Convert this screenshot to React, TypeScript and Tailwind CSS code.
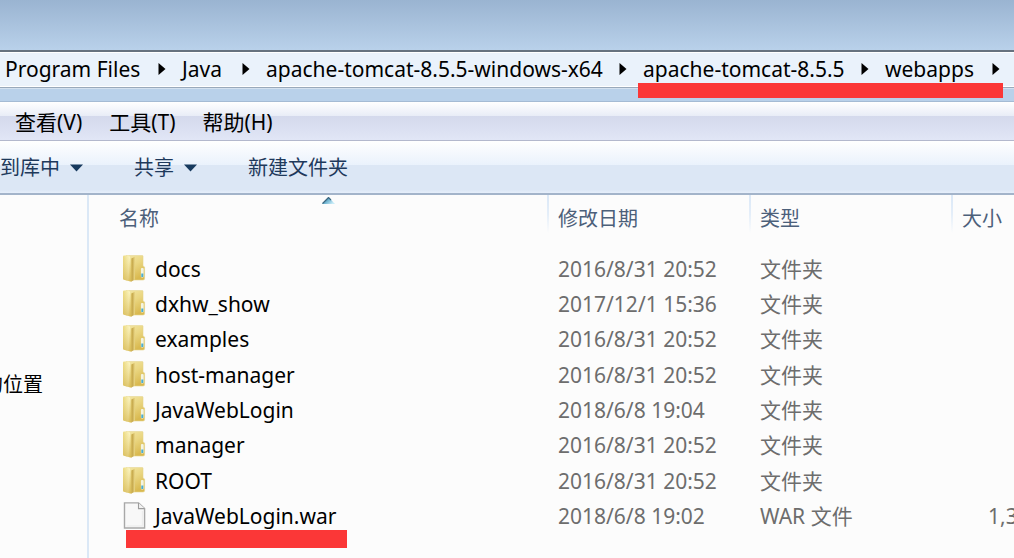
import React from "react";

type Entry = {
  name: string;
  modified: string;
  type: string;
  size?: string;
};

const entries: Entry[] = [
  { name: "docs", modified: "2016/8/31 20:52", type: "文件夹" },
  { name: "dxhw_show", modified: "2017/12/1 15:36", type: "文件夹" },
  { name: "examples", modified: "2016/8/31 20:52", type: "文件夹" },
  { name: "host-manager", modified: "2016/8/31 20:52", type: "文件夹" },
  { name: "JavaWebLogin", modified: "2018/6/8 19:04", type: "文件夹" },
  { name: "manager", modified: "2016/8/31 20:52", type: "文件夹" },
  { name: "ROOT", modified: "2016/8/31 20:52", type: "文件夹" },
  { name: "JavaWebLogin.war", modified: "2018/6/8 19:02", type: "WAR 文件", size: "1,3" },
];

function RightArrow() {
  return (
    <svg width="8" height="12" viewBox="0 0 8 12" className="shrink-0" aria-hidden="true">
      <path d="M0.5 0L7.5 6L0.5 12Z" fill="#000" />
    </svg>
  );
}

function DownArrow() {
  return (
    <svg width="13" height="8" viewBox="0 0 13 8" className="shrink-0" aria-hidden="true">
      <path d="M0 0.5H13L6.5 7.5Z" fill="#173a5e" />
    </svg>
  );
}

function FolderIcon() {
  return (
    <svg width="24" height="28" viewBox="0 0 24 28" className="shrink-0" aria-hidden="true">
      <defs>
        <linearGradient id="folder-back" x1="0" y1="0" x2="0.5" y2="1">
          <stop offset="0" stopColor="#f3e7a6" />
          <stop offset="0.5" stopColor="#ead681" />
          <stop offset="1" stopColor="#d9b950" />
        </linearGradient>
        <linearGradient id="folder-front" x1="0" y1="0" x2="1" y2="0.2">
          <stop offset="0" stopColor="#ebd980" />
          <stop offset="0.3" stopColor="#f2e59c" />
          <stop offset="0.75" stopColor="#fbf5c4" />
          <stop offset="1" stopColor="#e9d67e" />
        </linearGradient>
        <linearGradient id="folder-shade" x1="0" y1="0" x2="0" y2="1">
          <stop offset="0" stopColor="#d5b54a" stopOpacity="0" />
          <stop offset="1" stopColor="#cda93c" stopOpacity="0.6" />
        </linearGradient>
        <linearGradient id="folder-fold" x1="0" y1="0" x2="1" y2="0">
          <stop offset="0" stopColor="#d3b75a" />
          <stop offset="0.4" stopColor="#c9ac50" />
          <stop offset="1" stopColor="#ecd98a" />
        </linearGradient>
      </defs>
      <path d="M4 0.4H20Q21 0.4 21 1.4V11L22.6 12V23.5Q22.6 25 21 25H4Z" fill="url(#folder-back)" stroke="#e4d38c" strokeWidth="0.6" />
      <path d="M1 1.4Q1 0.4 2 0.4H6.5L9.5 3.2V26.2L8.5 26.6L1.8 24.8Q1 24.5 1 23.5Z" fill="url(#folder-front)" />
      <path d="M1 1.4Q1 0.4 2 0.4H6.5L9.5 3.2V26.2L8.5 26.6L1.8 24.8Q1 24.5 1 23.5Z" fill="url(#folder-shade)" />
      <path d="M9.3 3.6L13 1.8V24.5L9 26.8Z" fill="url(#folder-fold)" />
      <rect x="18.9" y="13" width="2.8" height="9.5" rx="1" fill="#f3f4e2" />
      <rect x="19.3" y="18.5" width="2" height="3.5" fill="#4badcf" />
    </svg>
  );
}

function FileIcon() {
  return (
    <svg width="24" height="28" viewBox="0 0 24 28" className="shrink-0" aria-hidden="true">
      <path d="M2.5 0.9H16.5L22.6 6.6V26H2.5Z" fill="#f8f8f8" stroke="#a8a8a8" strokeWidth="1.4" />
      <path d="M16.5 0.9V6.6H22.6" fill="#f2f2f2" stroke="#9c9c9c" strokeWidth="1.1" />
      <path d="M4.5 24H20.5V9" fill="none" stroke="#eeeeee" strokeWidth="1.5" />
    </svg>
  );
}

function Crumb({ label, className }: { label: string; className: string }) {
  return (
    <li className={`flex shrink-0 items-center justify-between pr-4 ${className}`}>
      <button type="button" className="whitespace-nowrap">{label}</button>
      <RightArrow />
    </li>
  );
}

export default function App() {
  return (
    <div className="flex min-h-screen flex-col overflow-hidden bg-[#fcfcfc] font-['Noto_Sans','Noto_Sans_CJK_SC',sans-serif] text-[20px] leading-7 text-black">
      <header className="h-[50px] bg-linear-to-b from-[#9ab4d1] to-[#b9d1ea]" />

      <nav aria-label="地址" className="border-t-2 border-b border-t-[#66727f] border-b-[#99a9bb] bg-[#eaf2fb] text-[21px] shadow-[inset_0_1px_0_#fff,inset_0_-1px_0_#fff]">
        <ol className="flex h-[35px] items-center pb-[2px] pl-[5px]">
          <Crumb label="Program Files" className="w-[177px]" />
          <Crumb label="Java" className="w-[84px]" />
          <Crumb label="apache-tomcat-8.5.5-windows-x64" className="w-[377px]" />
          <li className="relative shrink-0">
            <ol className="flex">
              <Crumb label="apache-tomcat-8.5.5" className="w-[242px]" />
              <Crumb label="webapps" className="w-[131px]" />
            </ol>
            <span className="absolute top-[28px] right-[13px] -left-[5px] h-[15px] bg-[#fb3737]" />
          </li>
        </ol>
      </nav>

      <div className="h-[14px] border-t border-b border-t-[#d3e1f0] border-b-[#a5bbd4] bg-[#b9d1ea]" />

      <div role="menubar" className="flex h-[39px] items-center gap-[27px] border-b border-[#b3b8cd] bg-[linear-gradient(#ffffff,#e9edf7_36%,#d4d9ec_37%,#e1e6f6)] pt-[2px] pl-[15px] text-[21px]">
        <button type="button" role="menuitem">查看(V)</button>
        <button type="button" role="menuitem">工具(T)</button>
        <button type="button" role="menuitem">帮助(H)</button>
      </div>

      <div role="toolbar" className="flex h-[54px] items-center border-b-2 border-[#a3b4ca] bg-[linear-gradient(#ffffff,#eaf2fc_46%,#dce7f5_47%,#dce7f5_94%,#e6effb)] pt-[2px] text-[#1e395b]">
        <button type="button" className="flex w-[134px] items-center gap-[10px]">到库中 <DownArrow /></button>
        <button type="button" className="flex w-[114px] items-center gap-[10px]">共享 <DownArrow /></button>
        <button type="button">新建文件夹</button>
      </div>

      <main className="flex grow">
        <aside className="flex w-[89px] shrink-0 justify-end overflow-hidden border-r-2 border-[#dbe8f6] pt-[176px] pr-[44px]">
          <span className="shrink-0 whitespace-nowrap">的位置</span>
        </aside>

        <section className="min-w-0 grow overflow-hidden">
          <table className="w-full table-fixed border-collapse text-left">
            <colgroup>
              <col className="w-[458px]" />
              <col className="w-[202px]" />
              <col className="w-[202px]" />
              <col />
            </colgroup>
            <thead className="text-[#4c607a]">
              <tr className="h-[56px] align-top">
                <th className="relative p-0 pt-[10px] pl-[30px] font-normal">
                  名称
                  <svg width="13" height="7" viewBox="0 0 13 7" className="absolute top-[2px] left-[233px]" aria-hidden="true">
                    <defs>
                      <linearGradient id="sort-fill" x1="0" y1="0" x2="1" y2="0.6">
                        <stop offset="0.2" stopColor="#2f6480" />
                        <stop offset="0.55" stopColor="#6fb3d0" />
                        <stop offset="1" stopColor="#c9ecf8" />
                      </linearGradient>
                    </defs>
                    <path d="M6.5 0L13 7H0Z" fill="url(#sort-fill)" />
                    <path d="M0.5 6.5L6.5 0.5L9 3" fill="none" stroke="#3d6780" strokeWidth="1.1" />
                  </svg>
                </th>
                {["修改日期", "类型", "大小"].map((label) => (
                  <th key={label} className="bg-[linear-gradient(#dbe8f7,#e4eef9_50%,#fcfcfc)] bg-[length:2px_38px] bg-no-repeat p-0 pt-[10px] pl-[11px] font-normal whitespace-nowrap">
                    {label}
                  </th>
                ))}
              </tr>
            </thead>
            <tbody className="text-[21px] text-[#6d6d6d]">
              {entries.map((entry) => (
                <tr key={entry.name} className="h-[35px] nth-[3n]:h-[36px]">
                  <td className="p-0 pl-[33px] text-black">
                    <div className="flex items-center">
                      <div className="relative flex items-center gap-[9px]">
                        {entry.size ? <FileIcon /> : <FolderIcon />}
                        <span className="whitespace-nowrap">{entry.name}</span>
                        {entry.size && (
                          <span className="absolute top-[28px] -right-[11px] left-[4px] h-[18px] bg-[#fb3737]" />
                        )}
                      </div>
                    </div>
                  </td>
                  <td className="p-0 pl-[11px] whitespace-nowrap">{entry.modified}</td>
                  <td className="p-0 pl-[11px] whitespace-nowrap">{entry.type}</td>
                  <td className="overflow-hidden p-0 pl-[37px] whitespace-nowrap">{entry.size}</td>
                </tr>
              ))}
            </tbody>
          </table>
        </section>
      </main>
    </div>
  );
}
